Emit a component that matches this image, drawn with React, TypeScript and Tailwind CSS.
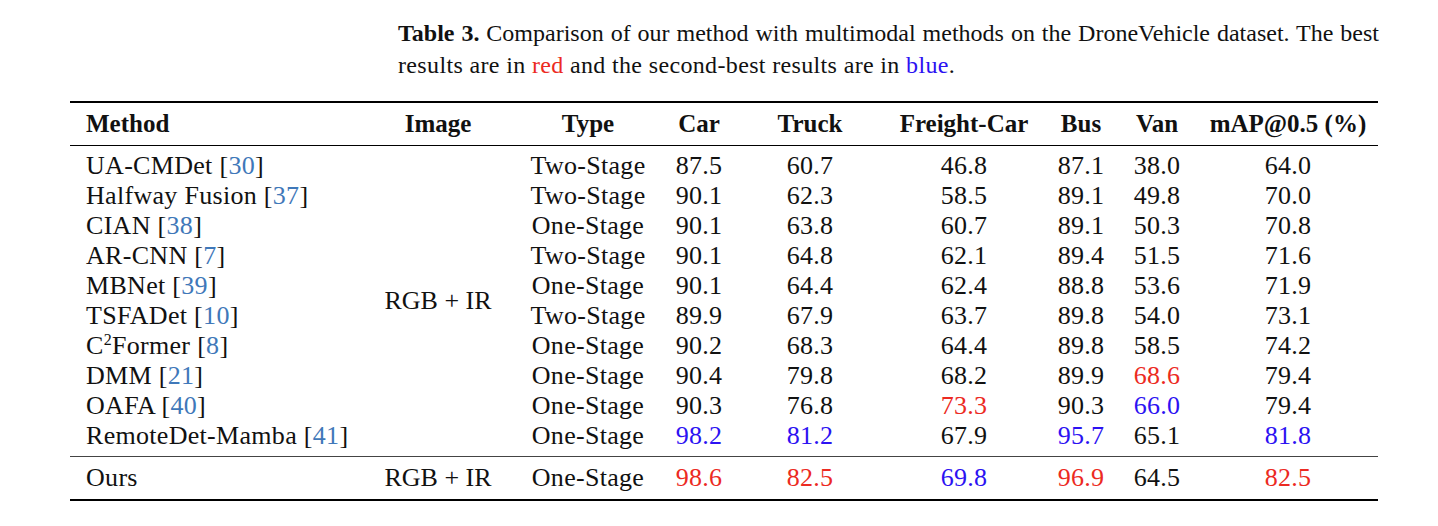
import React from 'react';

type Mark = 'r' | 'b' | undefined;

const RED = 'text-[#ec2a22]';
const BLUE = 'text-[#2c12f2]';

const rows: { method: string; sup?: boolean; cite: string; type: string; vals: [string, Mark][] }[] = [
  { method: 'UA-CMDet', cite: '30', type: 'Two-Stage', vals: [['87.5', undefined], ['60.7', undefined], ['46.8', undefined], ['87.1', undefined], ['38.0', undefined], ['64.0', undefined]] },
  { method: 'Halfway Fusion', cite: '37', type: 'Two-Stage', vals: [['90.1', undefined], ['62.3', undefined], ['58.5', undefined], ['89.1', undefined], ['49.8', undefined], ['70.0', undefined]] },
  { method: 'CIAN', cite: '38', type: 'One-Stage', vals: [['90.1', undefined], ['63.8', undefined], ['60.7', undefined], ['89.1', undefined], ['50.3', undefined], ['70.8', undefined]] },
  { method: 'AR-CNN', cite: '7', type: 'Two-Stage', vals: [['90.1', undefined], ['64.8', undefined], ['62.1', undefined], ['89.4', undefined], ['51.5', undefined], ['71.6', undefined]] },
  { method: 'MBNet', cite: '39', type: 'One-Stage', vals: [['90.1', undefined], ['64.4', undefined], ['62.4', undefined], ['88.8', undefined], ['53.6', undefined], ['71.9', undefined]] },
  { method: 'TSFADet', cite: '10', type: 'Two-Stage', vals: [['89.9', undefined], ['67.9', undefined], ['63.7', undefined], ['89.8', undefined], ['54.0', undefined], ['73.1', undefined]] },
  { method: 'C', sup: true, cite: '8', type: 'One-Stage', vals: [['90.2', undefined], ['68.3', undefined], ['64.4', undefined], ['89.8', undefined], ['58.5', undefined], ['74.2', undefined]] },
  { method: 'DMM', cite: '21', type: 'One-Stage', vals: [['90.4', undefined], ['79.8', undefined], ['68.2', undefined], ['89.9', undefined], ['68.6', 'r'], ['79.4', undefined]] },
  { method: 'OAFA', cite: '40', type: 'One-Stage', vals: [['90.3', undefined], ['76.8', undefined], ['73.3', 'r'], ['90.3', undefined], ['66.0', 'b'], ['79.4', undefined]] },
  { method: 'RemoteDet-Mamba', cite: '41', type: 'One-Stage', vals: [['98.2', 'b'], ['81.2', 'b'], ['67.9', undefined], ['95.7', 'b'], ['65.1', undefined], ['81.8', 'b']] },
];

const ours: [string, Mark][] = [['98.6', 'r'], ['82.5', 'r'], ['69.8', 'b'], ['96.9', 'r'], ['64.5', undefined], ['82.5', 'r']];

const cols = 'grid grid-cols-[297px_142px_158px_64px_158px_150px_84px_68px_194px]';

const Val = ({ v }: { v: [string, Mark] }) => (
  <div className={`text-center ${v[1] === 'r' ? RED : v[1] === 'b' ? BLUE : ''}`}>{v[0]}</div>
);

export default function App() {
  return (
    <div className="w-[1438px] h-[526px] bg-white text-[#111] font-['Liberation_Serif',serif] overflow-hidden">
      {/* caption */}
      <div className="ml-[398px] w-[981px] pt-[17px] text-[24px] leading-[32px]">
        <p className="[text-align-last:justify]">
          <b>Table 3.</b> Comparison of our method with multimodal methods on the DroneVehicle dataset. The best
        </p>
        <p className="tracking-[0.35px]">
          results are in <span className={RED}>red</span> and the second-best results are in{' '}
          <span className={BLUE}>blue</span>.
        </p>
      </div>

      <div className="ml-[70px] w-[1308px] mt-[20px] text-[26px] leading-[30px] tracking-[0.3px]">
        <div className="h-[2px] bg-black" />
        <div className={`${cols} h-[42px] items-center font-bold text-[25px] tracking-normal`}>
          <div className="pl-[16px]">Method</div>
          <div className="text-center">Image</div>
          <div className="text-center">Type</div>
          <div className="text-center">Car</div>
          <div className="text-center">Truck</div>
          <div className="text-center">Freight-Car</div>
          <div className="text-center">Bus</div>
          <div className="text-center">Van</div>
          <div className="text-center">mAP@0.5 (%)</div>
        </div>
        <div className="h-px bg-black" />

        <div className={`${cols} grid-rows-[repeat(10,30px)] py-[5px]`}>
          {rows.map((r, i) => (
            <React.Fragment key={r.method}>
              <div className="pl-[16px] whitespace-nowrap" style={{ gridRow: i + 1, gridColumn: 1 }}>
                {r.method}
                {r.sup && (
                  <>
                    <span className="relative -top-[9px] text-[16px] leading-none">2</span>Former
                  </>
                )}{' '}
                [<span className="text-[#3f78b9]">{r.cite}</span>]
              </div>
              <div className="text-center" style={{ gridRow: i + 1, gridColumn: 3 }}>
                {r.type}
              </div>
              {r.vals.map((v, j) => (
                <div key={j} style={{ gridRow: i + 1, gridColumn: j + 4 }}>
                  <Val v={v} />
                </div>
              ))}
            </React.Fragment>
          ))}
          <div className="col-start-2 row-start-1 row-span-10 flex items-center justify-center tracking-normal">
            RGB + IR
          </div>
        </div>

        <div className="h-px bg-[#444]" />
        <div className={`${cols} h-[30px] mt-[6px] mb-[6px]`}>
          <div className="pl-[16px]">Ours</div>
          <div className="text-center tracking-normal">RGB + IR</div>
          <div className="text-center">One-Stage</div>
          {ours.map((v, j) => (
            <Val key={j} v={v} />
          ))}
        </div>
        <div className="h-[2px] bg-black" />
      </div>
    </div>
  );
}
